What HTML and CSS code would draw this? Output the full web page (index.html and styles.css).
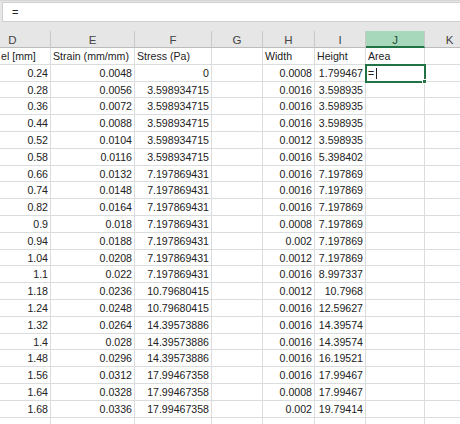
FILE: index.html
```html
<!DOCTYPE html>
<html>
<head>
<meta charset="utf-8">
<link rel="stylesheet" href="styles.css">
</head>
<body>
<div class="app">
  <div class="fbar"><div class="fbox">=</div></div>
  <div class="sheet" id="sheet">
    <div class="ch">D</div><div class="ch">E</div><div class="ch">F</div><div class="ch">G</div><div class="ch">H</div><div class="ch">I</div><div class="ch sel">J</div><div class="ch">K</div>
    <div class="c lbl lbl-d">el [mm]</div><div class="c lbl">Strain (mm/mm)</div><div class="c lbl">Stress (Pa)</div><div class="c"></div><div class="c lbl">Width</div><div class="c lbl">Height</div><div class="c lbl">Area</div><div class="c"></div>
  </div>
</div>
<script src="app.js"></script>
</body>
</html>
```
FILE: app.js
```js
const rows = [
["0.24","0.0048","0","0.0008","1.799467"],
["0.28","0.0056","3.598934715","0.0016","3.598935"],
["0.36","0.0072","3.598934715","0.0016","3.598935"],
["0.44","0.0088","3.598934715","0.0016","3.598935"],
["0.52","0.0104","3.598934715","0.0012","3.598935"],
["0.58","0.0116","3.598934715","0.0016","5.398402"],
["0.66","0.0132","7.197869431","0.0016","7.197869"],
["0.74","0.0148","7.197869431","0.0016","7.197869"],
["0.82","0.0164","7.197869431","0.0016","7.197869"],
["0.9","0.018","7.197869431","0.0008","7.197869"],
["0.94","0.0188","7.197869431","0.002","7.197869"],
["1.04","0.0208","7.197869431","0.0012","7.197869"],
["1.1","0.022","7.197869431","0.0016","8.997337"],
["1.18","0.0236","10.79680415","0.0012","10.7968"],
["1.24","0.0248","10.79680415","0.0016","12.59627"],
["1.32","0.0264","14.39573886","0.0016","14.39574"],
["1.4","0.028","14.39573886","0.0016","14.39574"],
["1.48","0.0296","14.39573886","0.0016","16.19521"],
["1.56","0.0312","17.99467358","0.0016","17.99467"],
["1.64","0.0328","17.99467358","0.0008","17.99467"],
["1.68","0.0336","17.99467358","0.002","19.79414"],
["","","","",""]
];
const sheet = document.getElementById('sheet');
rows.forEach((r, i) => {
  const vals = [r[0], r[1], r[2], "", r[3], r[4], null, ""];
  vals.forEach((v) => {
    const d = document.createElement('div');
    d.className = 'c num';
    if (v === null) {
      if (i === 0) {
        d.className = 'c active';
        d.innerHTML = '<span class="eq">=</span><span class="caret"></span><span class="handle"></span>';
      }
    } else {
      d.textContent = v;
    }
    sheet.appendChild(d);
  });
});
```
FILE: styles.css
```css
html, body {
  margin: 0;
  padding: 0;
  background: #fff;
}
body {
  width: 460px;
  height: 424px;
  overflow: hidden;
  font-family: "Liberation Sans", Arial, sans-serif;
  font-size: 10.6px;
  color: #222;
}
.app {
  width: 460px;
  height: 424px;
  overflow: hidden;
}
.fbar {
  height: 31px;
  box-sizing: border-box;
  background: #e6e6e6;
  border-top: 1px solid #d6d6d6;
  padding-top: 1px;
}
.fbox {
  margin-left: 2px;
  height: 20px;
  box-sizing: border-box;
  background: #fff;
  border: 1px solid #cfcfcf;
  border-right: none;
  padding-left: 9px;
  line-height: 19px;
  font-size: 11px;
  color: #222;
}
.sheet {
  margin-left: -25px;
  display: grid;
  grid-template-columns: 76px 84px 77px 51px 52px 51px 59px 50px;
  grid-template-rows: 17px;
  grid-auto-rows: 16.8px;
}
.ch {
  background: #e6e6e6;
  border-right: 1px solid #c9c9c9;
  border-bottom: 1px solid #bcbcbc;
  box-sizing: border-box;
  text-align: center;
  line-height: 17px;
  font-size: 11.5px;
  color: #444;
  padding-top: 1px;
}
.ch.sel {
  background: #a8d8bb;
  border-bottom: 2px solid #217346;
  color: #1d4f33;
}
.c {
  box-sizing: border-box;
  border-right: 1px solid #dadcdd;
  border-bottom: 1px solid #dadcdd;
  line-height: 15.8px;
  padding-top: 1px;
  white-space: nowrap;
  overflow: hidden;
}
.lbl {
  padding-left: 2px;
}
.lbl-d {
  padding-left: 26px;
}
.num {
  text-align: right;
  padding-right: 2px;
}
.active {
  position: relative;
  overflow: visible;
  outline: 2px solid #217346;
  outline-offset: -1px;
  padding-left: 2px;
}
.eq {
  display: inline-block;
}
.caret {
  display: inline-block;
  width: 1px;
  height: 11px;
  background: #222;
  margin-left: 2px;
  vertical-align: -2px;
}
.handle {
  position: absolute;
  right: -3px;
  bottom: -3px;
  width: 5px;
  height: 5px;
  background: #217346;
  border: 1px solid #fff;
  box-sizing: border-box;
}
```
